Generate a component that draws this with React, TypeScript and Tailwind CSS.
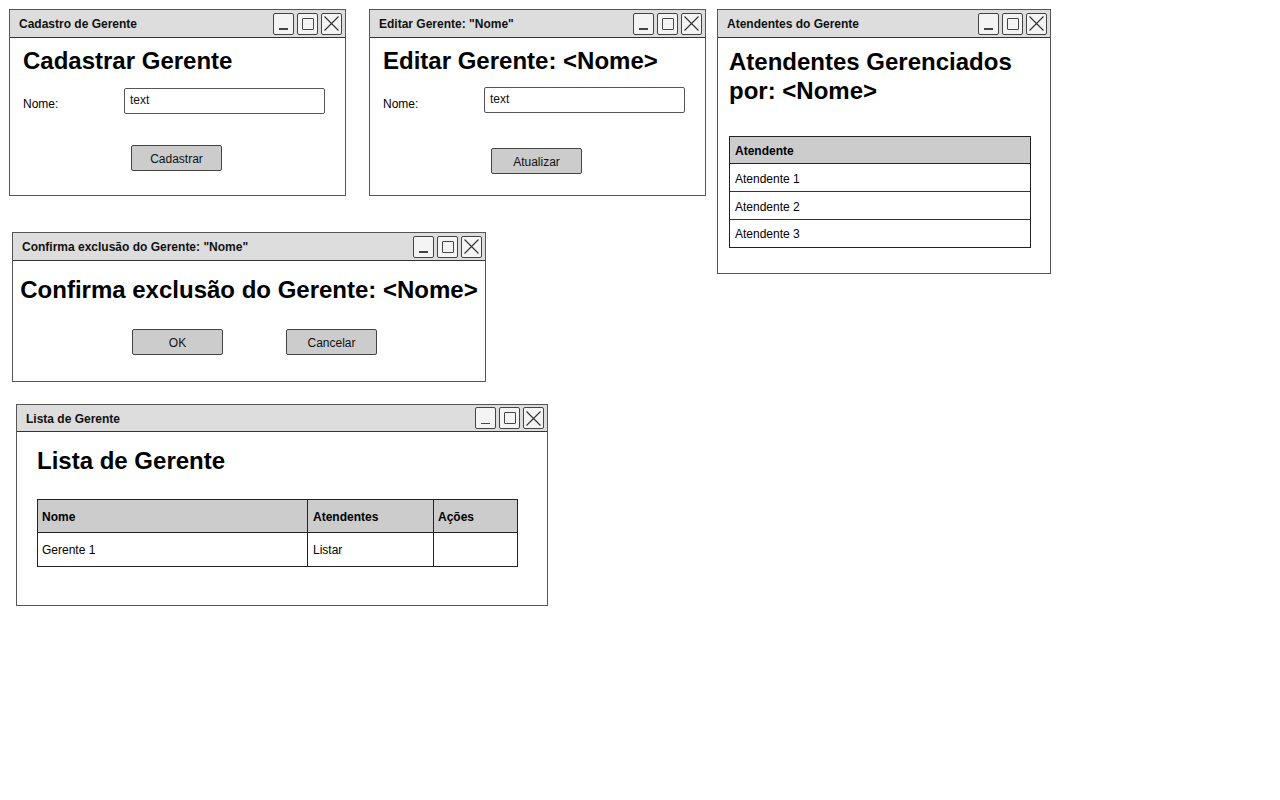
import React from "react";

const sketch = { fontFamily: '"Liberation Sans", Arial, sans-serif' };
const head = { fontFamily: '"Liberation Sans", Arial, Helvetica, sans-serif' };

function Controls() {
  return (
    <div className="flex gap-[3px] items-center">
      <div className="w-[21px] h-[22px] border border-[#444] bg-[#f4f4f4] rounded-[2px] relative">
        <div className="absolute left-[5px] right-[5px] bottom-[4px] h-[1.5px] bg-[#444]" />
      </div>
      <div className="w-[21px] h-[22px] border border-[#444] bg-[#f4f4f4] rounded-[2px] flex items-center justify-center">
        <div className="w-[12px] h-[12px] border border-[#444] rounded-[1px]" />
      </div>
      <div className="w-[21px] h-[22px] border border-[#444] bg-[#f4f4f4] rounded-[2px] flex items-center justify-center">
        <svg width="17" height="17" viewBox="0 0 17 17">
          <path d="M1.5 1.5 L15.5 15.5 M15.5 1.5 L1.5 15.5" stroke="#333" strokeWidth="1.1" fill="none" />
        </svg>
      </div>
    </div>
  );
}

function Win({
  title,
  left,
  top,
  width,
  height,
  children,
  barH = 28,
}: {
  title: string;
  left: number;
  top: number;
  width: number;
  height: number;
  children: React.ReactNode;
  barH?: number;
}) {
  return (
    <div
      className="absolute border-[1.5px] border-[#555] bg-white flex flex-col"
      style={{ left, top, width, height }}
    >
      <div
        className="flex items-center justify-between bg-[#dddddd] border-b-[1.5px] border-[#333] pl-[9px] pr-[3px] shrink-0"
        style={{ height: barH }}
      >
        <span className="text-[12px] font-bold text-[#111] pt-[1px]" style={sketch}>
          {title}
        </span>
        <Controls />
      </div>
      {children}
    </div>
  );
}

function Btn({ label, w = 91 }: { label: string; w?: number }) {
  return (
    <div
      className="h-[26px] bg-[#cccccc] border-[1.5px] border-[#444] rounded-[2px] flex items-center justify-center text-[12px] text-[#111] pt-[1px]"
      style={{ ...sketch, width: w }}
    >
      {label}
    </div>
  );
}

function Input() {
  return (
    <div
      className="w-[201px] h-[26px] border-[1.5px] border-[#555] rounded-[2px] bg-white pl-[5px] text-[12px] text-[#111] leading-[23px]"
      style={sketch}
    >
      text
    </div>
  );
}

export default function App() {
  return (
    <div className="relative w-[1280px] h-[800px] bg-white overflow-hidden text-black">
      {/* Window 1 */}
      <Win title="Cadastro de Gerente" left={9} top={9} width={337} height={187}>
        <div className="pl-[13px] pt-[9px]">
          <h1 className="text-[24px] font-bold leading-[28px]" style={head}>
            Cadastrar Gerente
          </h1>
          <div className="flex items-center mt-[13px]">
            <span className="w-[101px] pt-[6px] text-[12px]" style={sketch}>
              Nome:
            </span>
            <Input />
          </div>
          <div className="mt-[31px] ml-[108px]">
            <Btn label="Cadastrar" />
          </div>
        </div>
      </Win>

      {/* Window 2 */}
      <Win title={'Editar Gerente: "Nome"'} left={369} top={9} width={337} height={187}>
        <div className="pl-[13px] pt-[9px]">
          <h1 className="text-[24px] font-bold leading-[28px]" style={head}>
            Editar Gerente: &lt;Nome&gt;
          </h1>
          <div className="flex items-center mt-[12px]">
            <span className="w-[101px] pt-[7px] text-[12px]" style={sketch}>
              Nome:
            </span>
            <Input />
          </div>
          <div className="mt-[35px] ml-[108px]">
            <Btn label="Atualizar" />
          </div>
        </div>
      </Win>

      {/* Window 3 */}
      <Win title="Atendentes do Gerente" left={717} top={9} width={334} height={265}>
        <div className="pl-[11px] pt-[9px] pr-[18px]">
          <h1 className="text-[24px] font-bold leading-[29px]" style={head}>
            Atendentes Gerenciados
            <br />
            por: &lt;Nome&gt;
          </h1>
          <div className="mt-[31px] w-[302px] border-[1.5px] border-[#222]" style={sketch}>
            <div className="h-[27px] bg-[#cccccc] border-b-[1.5px] border-[#222] flex items-center pl-[5px] pt-[2px] text-[12px] font-bold">
              Atendente
            </div>
            <div className="h-[28px] border-b-[1.5px] border-[#333] flex items-center pl-[5px] pt-[2px] text-[12px]">
              Atendente 1
            </div>
            <div className="h-[28px] border-b-[1.5px] border-[#333] flex items-center pl-[5px] pt-[2px] text-[12px]">
              Atendente 2
            </div>
            <div className="h-[27px] flex items-center pl-[5px] pt-[1px] text-[12px]">
              Atendente 3
            </div>
          </div>
        </div>
      </Win>

      {/* Window 4 */}
      <Win title={'Confirma exclusão do Gerente: "Nome"'} left={12} top={232} width={474} height={150}>
        <div className="pt-[15px]">
          <h1 className="text-[24px] font-bold leading-[28px] text-center" style={head}>
            Confirma exclusão do Gerente: &lt;Nome&gt;
          </h1>
          <div className="flex mt-[25px] ml-[119px] gap-[63px]">
            <Btn label="OK" />
            <Btn label="Cancelar" />
          </div>
        </div>
      </Win>

      {/* Window 5 */}
      <Win title="Lista de Gerente" left={16} top={404} width={532} height={202} barH={27}>
        <div className="pl-[20px] pt-[15px]">
          <h1 className="text-[24px] font-bold leading-[28px]" style={head}>
            Lista de Gerente
          </h1>
          <div className="mt-[24px] w-[481px] border-[1.5px] border-[#222] text-[12px]" style={sketch}>
            <div className="flex h-[33px] bg-[#cccccc] border-b-[1.5px] border-[#222] font-bold">
              <div className="w-[270px] border-r-[1.5px] border-[#222] flex items-center pl-[4px] pt-[2px]">Nome</div>
              <div className="w-[126px] border-r-[1.5px] border-[#222] flex items-center pl-[5px] pt-[2px]">Atendentes</div>
              <div className="flex-1 flex items-center pl-[4px] pt-[2px]">Ações</div>
            </div>
            <div className="flex h-[33px]">
              <div className="w-[270px] border-r-[1.5px] border-[#222] flex items-center pl-[4px]">Gerente 1</div>
              <div className="w-[126px] border-r-[1.5px] border-[#222] flex items-center pl-[5px]">Listar</div>
              <div className="flex-1" />
            </div>
          </div>
        </div>
      </Win>
    </div>
  );
}
